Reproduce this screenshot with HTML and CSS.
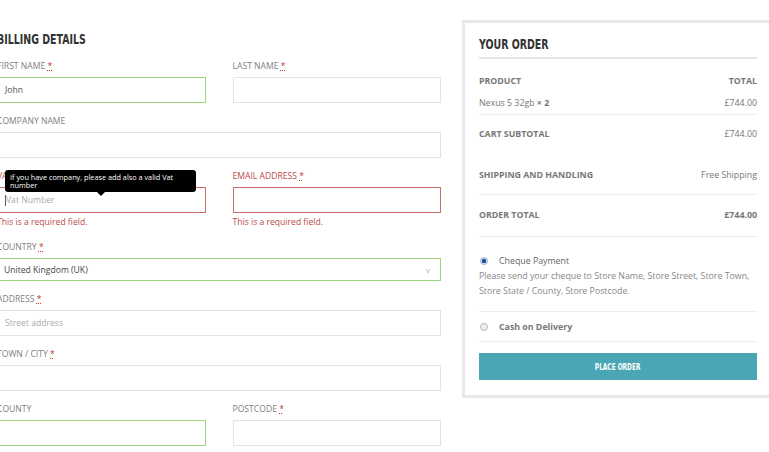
FILE: index.html
```html
<!DOCTYPE html>
<html lang="en">
<head>
    <meta charset="UTF-8">
    <meta name="viewport" content="width=device-width, initial-scale=1.0">
    <title>Checkout</title>
    <link rel="stylesheet" href="styles.css">
</head>
<body>

<div class="checkout">

    <!-- Billing Details -->
    <div class="billing">
        <h3 class="section-title"><span>Billing Details</span></h3>

        <div class="fields">
            <div class="field">
                <label>First Name <abbr>*</abbr></label>
                <div class="input valid">John</div>
            </div>
            <div class="field">
                <label>Last Name <abbr>*</abbr></label>
                <div class="input"></div>
            </div>

            <div class="field wide">
                <label>Company Name</label>
                <div class="input"></div>
            </div>

            <div class="field has-tip">
                <label class="error-label">Vat Number <abbr>*</abbr></label>
                <div class="input invalid"><span class="caret"></span><span class="placeholder">Vat Number</span></div>
                <div class="error-text">This is a required field.</div>
                <div class="tooltip">If you have company, please add also a valid Vat number</div>
            </div>
            <div class="field">
                <label class="error-label">Email Address <abbr>*</abbr></label>
                <div class="input invalid"></div>
                <div class="error-text">This is a required field.</div>
            </div>

            <div class="field wide">
                <label>Country <abbr>*</abbr></label>
                <div class="input select valid">
                    <span class="value">United Kingdom (UK)</span>
                    <span class="chevron">v</span>
                </div>
            </div>

            <div class="field wide">
                <label>Address <abbr>*</abbr></label>
                <div class="input"><span class="placeholder">Street address</span></div>
            </div>

            <div class="field wide">
                <label>Town / City <abbr>*</abbr></label>
                <div class="input"></div>
            </div>

            <div class="field">
                <label>County</label>
                <div class="input valid"></div>
            </div>
            <div class="field">
                <label>Postcode <abbr>*</abbr></label>
                <div class="input"></div>
            </div>
        </div>
    </div>

    <!-- Order Review -->
    <div class="order">
        <h3 class="section-title order-title"><span>Your Order</span></h3>

        <div class="order-row head">
            <span>Product</span>
            <span>Total</span>
        </div>
        <div class="order-row item">
            <span>Nexus 5 32gb <strong>&times; 2</strong></span>
            <span>&pound;744.00</span>
        </div>
        <div class="order-row subtotal">
            <span class="caps">Cart Subtotal</span>
            <span>&pound;744.00</span>
        </div>
        <div class="order-row shipping">
            <span class="caps">Shipping and Handling</span>
            <span>Free Shipping</span>
        </div>
        <div class="order-row total">
            <span class="caps">Order Total</span>
            <strong>&pound;744.00</strong>
        </div>

        <div class="payment">
            <div class="method first">
                <div class="method-name"><span class="radio checked"></span>Cheque Payment</div>
                <p class="method-desc">Please send your cheque to Store Name, Store Street, Store Town, Store State / County, Store Postcode.</p>
            </div>
            <div class="method">
                <div class="method-name bold"><span class="radio"></span>Cash on Delivery</div>
            </div>
        </div>

        <button class="place-order"><span>Place Order</span></button>
    </div>

</div>

</body>
</html>
```

FILE: styles.css
```css
/* Global */
body {
    margin: 0;
    font-family: "Open Sans", "Noto Sans", sans-serif;
    color: #777;
    background: #fff;
    overflow: hidden;
}

.checkout {
    display: flex;
    align-items: flex-start;
    margin-left: -3px;
}

/* Headings (condensed look) */
.section-title {
    margin: 0;
    font-family: "DejaVu Sans Condensed", "DejaVu Sans", sans-serif;
    font-weight: bold;
    font-size: 14px;
    line-height: 16px;
    color: #333;
    text-transform: uppercase;
}

.section-title span {
    display: inline-block;
    transform: scaleX(0.75);
    transform-origin: left center;
    white-space: nowrap;
}

/* Billing column */
.billing {
    flex: 0 0 444px;
    padding-top: 31px;
}

.billing .section-title {
    margin-bottom: 12px;
}

.fields {
    display: grid;
    grid-template-columns: 1fr 1fr;
    column-gap: 27px;
}

.field {
    position: relative;
    margin-bottom: 11px;
}

.field.wide {
    grid-column: span 2;
}

.field label {
    display: block;
    font-size: 8.6px;
    line-height: 14px;
    margin-bottom: 4px;
    text-transform: uppercase;
    color: #808080;
}

.field label abbr {
    color: #c0392b;
    text-decoration: underline dotted;
}

.field .error-label {
    color: #b94a48;
}

.input {
    box-sizing: border-box;
    height: 26px;
    border: 1px solid #e3e3e3;
    padding: 0 7px;
    font-size: 8.6px;
    line-height: 24px;
    color: #555;
    display: flex;
    align-items: center;
}

.input.valid {
    border-color: #9ed67f;
}

.input.invalid {
    border-color: #cf6d6d;
}

.input.select {
    height: 23px;
    padding: 0 10px 0 6px;
    justify-content: space-between;
    color: #444;
}

.chevron {
    color: #aaa;
    font-size: 8px;
}

.placeholder {
    color: #aaa;
}

.caret {
    width: 1px;
    height: 11px;
    background: #555;
}

.error-text {
    margin-top: 2px;
    font-size: 8.6px;
    line-height: 14px;
    color: #b94a48;
}

/* Tooltip over the vat label */
.tooltip {
    position: absolute;
    top: 1px;
    left: 8px;
    width: 191px;
    box-sizing: border-box;
    padding: 3px 5px;
    background: #000;
    color: #fff;
    border-radius: 3px;
    font-size: 7.3px;
    line-height: 8px;
}

.tooltip::after {
    content: "";
    position: absolute;
    left: 92px;
    bottom: -4px;
    border-left: 4px solid transparent;
    border-right: 4px solid transparent;
    border-top: 4px solid #000;
}

/* Order panel */
.order {
    box-sizing: border-box;
    flex: 0 0 312px;
    margin-left: 21px;
    margin-top: 20px;
    border: 3px solid #e8e8e8;
    padding: 13px 14px 15px;
}

.order-title {
    padding-bottom: 5px;
    border-bottom: 2px solid #e6e6e6;
}

.order-row {
    display: flex;
    justify-content: space-between;
    font-size: 8.8px;
    line-height: 14px;
    color: #777;
}

.order-row.head {
    padding-top: 15px;
    font-weight: bold;
    text-transform: uppercase;
}

.order-row.item {
    padding: 8px 0 4px;
    border-bottom: 1px solid #eee;
}

.order-row .caps {
    font-weight: bold;
    text-transform: uppercase;
}

.order-row.subtotal {
    padding: 12px 0 14px;
}

.order-row.shipping {
    padding: 13px 0 12px;
    border-bottom: 1px solid #eee;
}

.order-row.total {
    padding: 13px 0 14px;
    border-bottom: 1px solid #eee;
}

/* Payment methods */
.method {
    border-bottom: 1px solid #eee;
    font-size: 8.8px;
    line-height: 14px;
}

.method.first {
    padding: 17px 0 12px;
}

.method:not(.first) {
    padding: 8px 0 7px;
}

.method-name {
    display: flex;
    align-items: center;
    color: #666;
}

.method-name.bold {
    font-weight: bold;
    color: #777;
}

.radio {
    box-sizing: border-box;
    width: 8px;
    height: 8px;
    border-radius: 50%;
    border: 1px solid #bbb;
    background: #eee;
    margin: 0 11px 0 1px;
}

.radio.checked {
    border-color: #9fb3d1;
    background: radial-gradient(circle, #1f4f9e 0 2px, #d5e0f2 2.5px);
}

.method-desc {
    margin: 1px 0 0;
    line-height: 15px;
    color: #888;
}

/* Button */
.place-order {
    display: block;
    width: 100%;
    height: 27px;
    margin-top: 11px;
    border: none;
    background: #4aa5b4;
    color: #fff;
    font-family: "DejaVu Sans Condensed", "DejaVu Sans", sans-serif;
    font-weight: bold;
    font-size: 9px;
    text-transform: uppercase;
    cursor: pointer;
}

.place-order span {
    display: inline-block;
    transform: scaleX(0.72);
}
```
